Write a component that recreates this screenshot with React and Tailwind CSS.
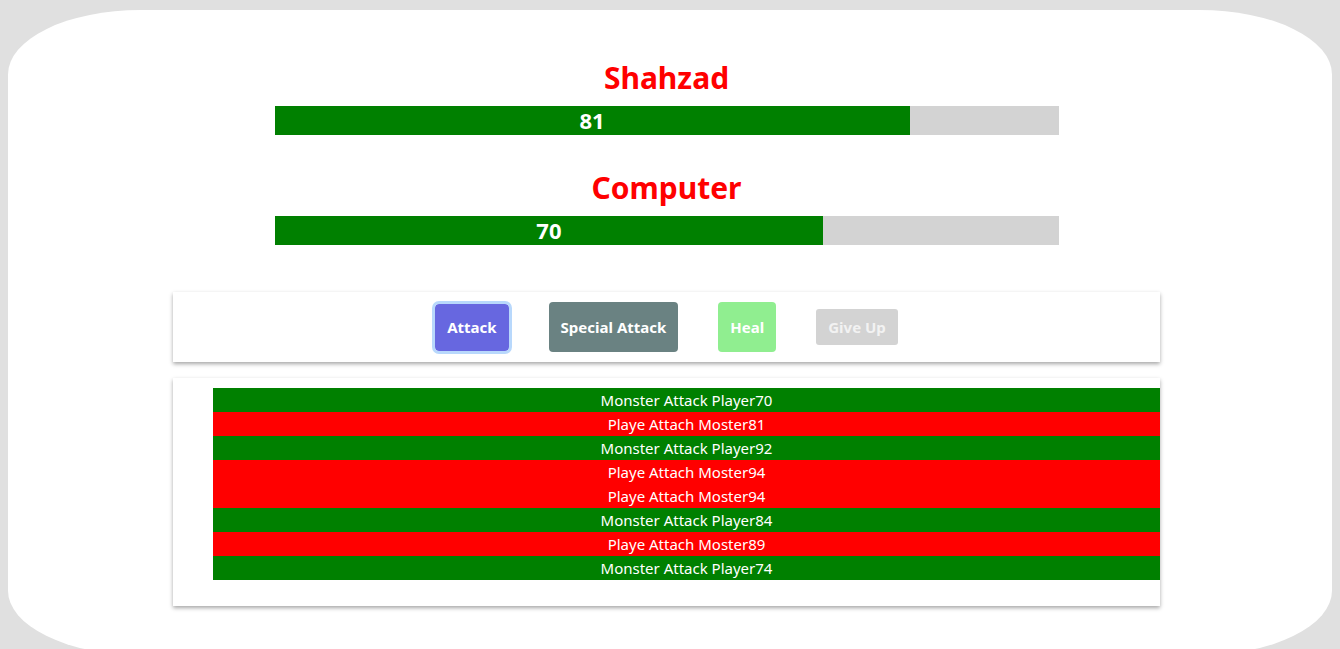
const logs = [
  { text: 'Monster Attack Player70', player: false },
  { text: 'Playe Attach Moster81', player: true },
  { text: 'Monster Attack Player92', player: false },
  { text: 'Playe Attach Moster94', player: true },
  { text: 'Playe Attach Moster94', player: true },
  { text: 'Monster Attack Player84', player: false },
  { text: 'Playe Attach Moster89', player: true },
  { text: 'Monster Attack Player74', player: false },
]

function HealthBar({ name, value, top }) {
  return (
    <section className={`flex flex-col items-center ${top}`}>
      <h2 className="text-[30px] font-bold leading-[36px] text-[#ff0000]">{name}</h2>
      <div className="mt-[10px] w-[784px] h-[29px] bg-[#d3d3d3]">
        <div
          className="h-full bg-[#008000] flex items-center justify-center text-white text-[22px] font-bold"
          style={{ width: `${value}%` }}
        >
          {value}
        </div>
      </div>
    </section>
  )
}

export default function App() {
  return (
    <div className="min-h-[649px] bg-[#e0e0e0] pt-[10px] px-[8px] overflow-hidden" style={{ fontFamily: '"Noto Sans", sans-serif' }}>
      <div className="bg-white h-[645px] rounded-[10%] pr-[7px] flex flex-col items-center">
        <HealthBar name="Shahzad" value={81} top="mt-[50px]" />
        <HealthBar name="Computer" value={70} top="mt-[35px]" />

        {/* Controls */}
        <div className="mt-[47px] w-[987px] h-[70px] bg-white shadow-[0_2px_4px_rgba(0,0,0,0.35)] flex items-center justify-center gap-[40px]">
          <button className="h-[47px] px-[12px] rounded-[4px] bg-[#6767e0] text-white text-[15px] font-bold outline outline-[3px] outline-[#b8d8fc]">
            Attack
          </button>
          <button className="h-[50px] px-[12px] rounded-[4px] bg-[#6a8282] text-white text-[15px] font-bold">
            Special Attack
          </button>
          <button className="h-[50px] px-[12px] rounded-[4px] bg-[#90ee90] text-white text-[15px] font-bold">
            Heal
          </button>
          <button className="h-[36px] px-[12px] rounded-[3px] bg-[#d3d3d3] text-[#f2f2f2] text-[15px] font-bold">
            Give Up
          </button>
        </div>

        {/* Battle log */}
        <div className="mt-[16px] w-[987px] bg-white shadow-[0_2px_4px_rgba(0,0,0,0.35)] pt-[10px] pb-[26px] pl-[40px]">
          <ul>
            {logs.map((l, i) => (
              <li
                key={i}
                className={`h-[24px] flex items-center justify-center text-white text-[15px] ${l.player ? 'bg-[#ff0000]' : 'bg-[#008000]'}`}
              >
                {l.text}
              </li>
            ))}
          </ul>
        </div>
      </div>
    </div>
  )
}
